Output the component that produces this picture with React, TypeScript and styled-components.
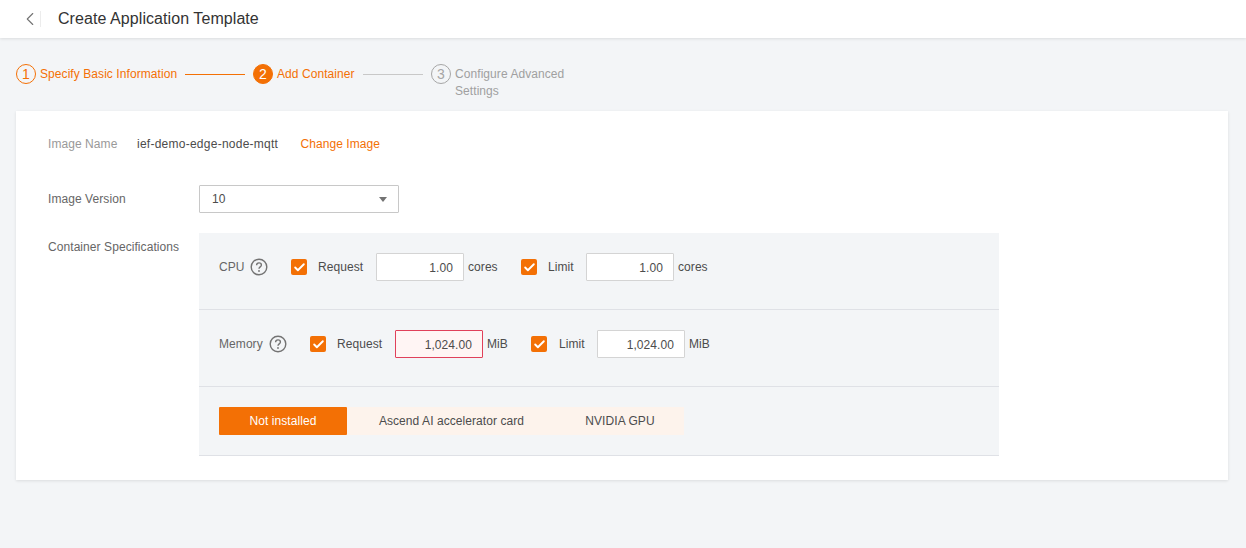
import * as React from "react";
import styled, { createGlobalStyle } from "styled-components";
import { ChevronLeft, Check } from "lucide-react";

const ORANGE = "#f37005";

const GlobalStyle = createGlobalStyle`
  html, body {
    margin: 0;
    padding: 0;
    background: #f3f5f7;
    font-family: "Liberation Sans", Arial, sans-serif;
    font-size: 12px;
    letter-spacing: 0.07px;
    color: #4c4c4c;
  }
`;

const Page = styled.div`
  height: 548px;
  overflow: hidden;
`;

const Header = styled.header`
  display: flex;
  align-items: center;
  height: 38px;
  background: #fff;
  box-shadow: 0 1px 3px rgba(0, 0, 0, 0.1);
`;

const BackButton = styled.span`
  display: flex;
  justify-content: center;
  width: 24px;
  margin-left: 18px;
  color: #737373;
`;

const HeaderDivider = styled.span`
  width: 1px;
  height: 16px;
  margin: 0 17px 0 -2px;
  background: #ececec;
`;

const Title = styled.h1`
  margin: 0;
  font-size: 16px;
  font-weight: 400;
  color: #333;
`;

const Steps = styled.ol`
  display: flex;
  align-items: flex-start;
  height: 46px;
  margin: 0;
  padding: 27px 0 0 16px;
  list-style: none;
`;

const Step = styled.li`
  display: flex;
  align-items: flex-start;
  gap: 4px;
`;

const StepNumber = styled.span<{ $state: "done" | "active" | "todo" }>`
  display: flex;
  align-items: center;
  justify-content: center;
  box-sizing: border-box;
  flex: none;
  width: 20px;
  height: 20px;
  margin-top: -1px;
  border-radius: 50%;
  font-size: 14px;
  border: 1px solid ${(p) => (p.$state === "todo" ? "#a6a6a6" : ORANGE)};
  background: ${(p) => (p.$state === "active" ? ORANGE : "transparent")};
  color: ${(p) =>
    p.$state === "active" ? "#fff" : p.$state === "done" ? ORANGE : "#a6a6a6"};
`;

const StepLabel = styled.span<{ $todo?: boolean; $width: number }>`
  width: ${(p) => p.$width}px;
  line-height: 17px;
  margin-top: 1px;
  white-space: ${(p) => (p.$todo ? "normal" : "nowrap")};
  color: ${(p) => (p.$todo ? "#a0a0a0" : ORANGE)};
`;

const StepLine = styled.span<{ $done?: boolean }>`
  flex: none;
  width: 60px;
  height: 1px;
  margin: 9px 8px 0;
  background: ${(p) => (p.$done ? ORANGE : "#c8c8c8")};
`;

const Card = styled.main`
  height: 369px;
  margin: 0 18px 0 16px;
  padding: 0 32px;
  background: #fff;
  box-shadow: 0 1px 3px rgba(0, 0, 0, 0.1);
`;

const FormRow = styled.div<{ $height: number }>`
  display: flex;
  align-items: flex-start;
  min-height: ${(p) => p.$height}px;
`;

const FieldLabel = styled.span`
  flex: none;
  width: 151px;
  line-height: 28px;
  color: #666;
`;

const InfoRow = styled.div`
  display: flex;
  align-items: center;
  box-sizing: border-box;
  height: 74px;
  padding-bottom: 8px;
  line-height: 28px;
`;

const InfoLabel = styled.span`
  width: 89px;
  color: #999;
`;

const InfoValue = styled.span`
  width: 163.5px;
  letter-spacing: 0.25px;
  color: #4c4c4c;
`;

const TextLink = styled.a`
  color: ${ORANGE};
`;

const Select = styled.div`
  display: flex;
  align-items: center;
  justify-content: space-between;
  box-sizing: border-box;
  width: 200px;
  height: 28px;
  padding: 0 11px 0 12px;
  border: 1px solid #c8c8c8;
  border-radius: 1px;
`;

const Caret = styled.span`
  width: 0;
  height: 0;
  border-left: 4px solid transparent;
  border-right: 4px solid transparent;
  border-top: 5px solid #737373;
`;

const SpecPanel = styled.div`
  width: 800px;
  background: #f3f5f7;
  border-bottom: 1px solid #dfe1e6;
`;

const SpecRow = styled.div<{ $height: number }>`
  display: flex;
  align-items: flex-start;
  box-sizing: border-box;
  height: ${(p) => p.$height}px;
  padding: 20px 20px 0;
  & + & {
    border-top: 1px solid #dfe1e6;
  }
`;

const SpecName = styled.span<{ $width: number }>`
  flex: none;
  width: ${(p) => p.$width}px;
  line-height: 28px;
  color: #666;
`;

const HelpIcon = styled.svg`
  flex: none;
  width: 18px;
  height: 18px;
  margin: 5px 23px 0 5px;
`;

const CheckBox = styled.span`
  display: flex;
  align-items: center;
  justify-content: center;
  flex: none;
  width: 16px;
  height: 16px;
  margin-top: 6px;
  border-radius: 2px;
  background: ${ORANGE};
  color: #fff;
`;

const CheckLabel = styled.span<{ $width: number; $gap?: number }>`
  flex: none;
  width: ${(p) => p.$width}px;
  margin-left: ${(p) => p.$gap ?? 11}px;
  line-height: 28px;
`;

const NumberBox = styled.div<{ $error?: boolean }>`
  flex: none;
  box-sizing: border-box;
  width: 88px;
  height: 28px;
  padding-right: 10px;
  line-height: 28px;
  text-align: right;
  font-size: 12px;
  background: ${(p) => (p.$error ? "#fff5f4" : "#fff")};
  border: 1px solid ${(p) => (p.$error ? "#e0405a" : "#d4d4d4")};
  border-radius: 1px;
`;

const Unit = styled.span<{ $width: number }>`
  flex: none;
  width: ${(p) => p.$width}px;
  margin-left: 4px;
  line-height: 28px;
`;

const Tabs = styled.div`
  display: flex;
  width: fit-content;
  background: #fdf3ec;
`;

const Tab = styled.span<{ $active?: boolean; $width: number }>`
  width: ${(p) => p.$width}px;
  line-height: 28px;
  text-align: center;
  border-radius: 1px;
  background: ${(p) => (p.$active ? ORANGE : "transparent")};
  color: ${(p) => (p.$active ? "#fff" : "#4c4c4c")};
`;

const Help = () => (
  <HelpIcon viewBox="0 0 18 18" fill="none">
    <circle cx="9" cy="9" r="7.8" stroke="#737373" strokeWidth="1.4" />
    <path
      d="M6.6 7.2c0-1.4 1-2.3 2.4-2.3s2.4.9 2.4 2.1c0 1.9-2.4 1.9-2.4 3.7"
      stroke="#737373"
      strokeWidth="1.4"
    />
    <circle cx="9" cy="13" r=".9" fill="#737373" />
  </HelpIcon>
);

const Tick = () => (
  <CheckBox>
    <Check size={13} strokeWidth={3.5} />
  </CheckBox>
);

const App: React.FC = () => {
  return (
    <Page>
      <GlobalStyle />
      <Header>
        <BackButton>
          <ChevronLeft size={22} strokeWidth={1.2} />
        </BackButton>
        <HeaderDivider />
        <Title>Create Application Template</Title>
      </Header>
      <Steps>
        <Step>
          <StepNumber $state="done">1</StepNumber>
          <StepLabel $width={137}>Specify Basic Information</StepLabel>
        </Step>
        <StepLine $done />
        <Step>
          <StepNumber $state="active">2</StepNumber>
          <StepLabel $width={78}>Add Container</StepLabel>
        </Step>
        <StepLine />
        <Step>
          <StepNumber $state="todo">3</StepNumber>
          <StepLabel $todo $width={120}>
            Configure Advanced Settings
          </StepLabel>
        </Step>
      </Steps>
      <Card>
        <InfoRow>
          <InfoLabel>Image Name</InfoLabel>
          <InfoValue>ief-demo-edge-node-mqtt</InfoValue>
          <TextLink>Change Image</TextLink>
        </InfoRow>
        <FormRow $height={48}>
          <FieldLabel>Image Version</FieldLabel>
          <Select>
            10
            <Caret />
          </Select>
        </FormRow>
        <FormRow $height={223}>
          <FieldLabel>Container Specifications</FieldLabel>
          <SpecPanel>
            <SpecRow $height={76}>
              <SpecName $width={26}>CPU</SpecName>
              <Help />
              <Tick />
              <CheckLabel $width={47 + 11}>Request</CheckLabel>
              <NumberBox>1.00</NumberBox>
              <Unit $width={53}>cores</Unit>
              <Tick />
              <CheckLabel $width={38}>Limit</CheckLabel>
              <NumberBox>1.00</NumberBox>
              <Unit $width={40}>cores</Unit>
            </SpecRow>
            <SpecRow $height={77}>
              <SpecName $width={45}>Memory</SpecName>
              <Help />
              <Tick />
              <CheckLabel $width={47 + 11}>Request</CheckLabel>
              <NumberBox $error>1,024.00</NumberBox>
              <Unit $width={44}>MiB</Unit>
              <Tick />
              <CheckLabel $width={38} $gap={12}>
                Limit
              </CheckLabel>
              <NumberBox>1,024.00</NumberBox>
              <Unit $width={30}>MiB</Unit>
            </SpecRow>
            <SpecRow $height={69}>
              <Tabs>
                <Tab $active $width={128}>
                  Not installed
                </Tab>
                <Tab $width={209}>Ascend AI accelerator card</Tab>
                <Tab $width={128}>NVIDIA GPU</Tab>
              </Tabs>
            </SpecRow>
          </SpecPanel>
        </FormRow>
      </Card>
    </Page>
  );
};

export default App;
